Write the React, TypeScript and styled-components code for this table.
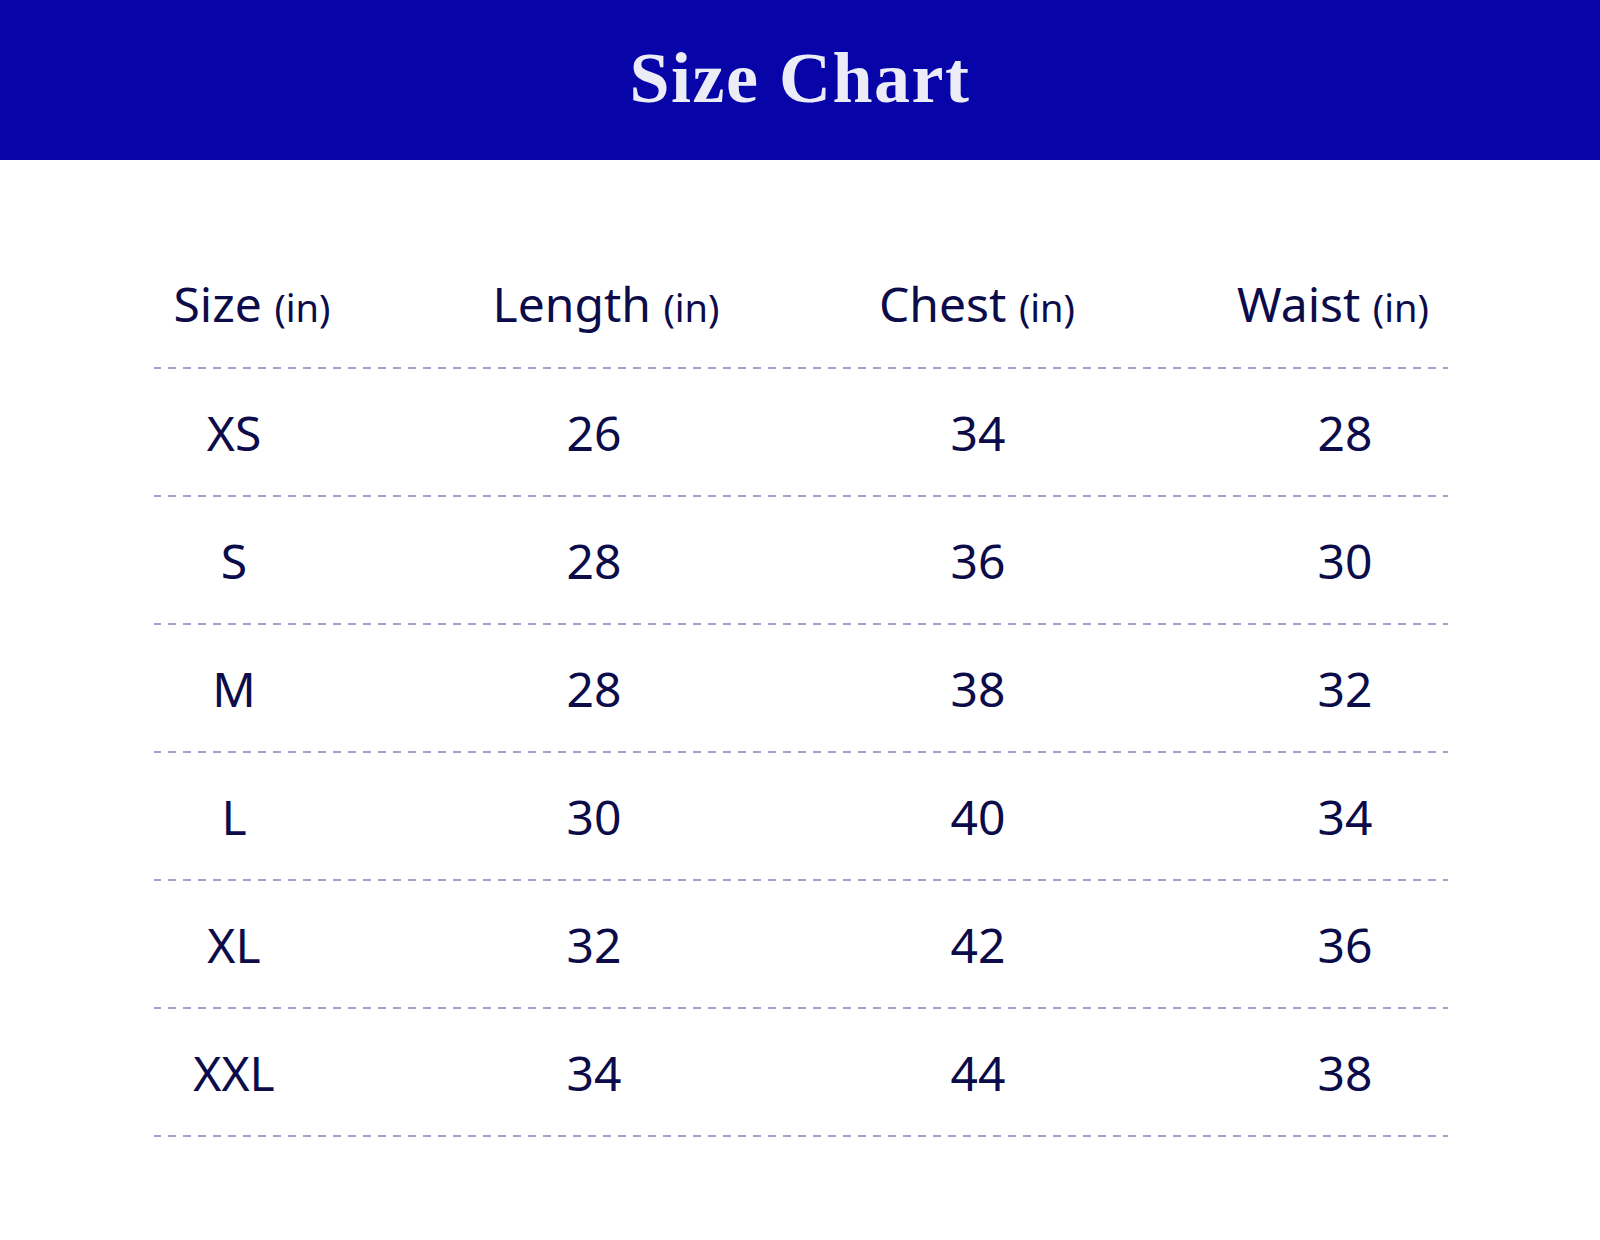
import React from "react";
import styled, { createGlobalStyle } from "styled-components";

const Global = createGlobalStyle`
  html, body { margin: 0; padding: 0; background: #ffffff; }
  body { font-family: "Noto Sans", "Open Sans", sans-serif; }
`;

const Page = styled.div`
  width: 1600px;
  min-height: 1240px;
  background: #ffffff;
`;

const Banner = styled.header`
  height: 160px;
  background: #0805a8;
  display: flex;
  align-items: center;
  justify-content: center;
`;

const Title = styled.h1`
  margin: 0;
  padding-bottom: 4px;
  font-family: "Liberation Serif", "Times New Roman", serif;
  font-weight: 700;
  font-size: 72px;
  letter-spacing: 1.5px;
  color: #ececf6;
  line-height: 1;
`;

const Table = styled.section`
  width: 1294px;
  margin: 0 0 0 154px;
  color: #0c0c4a;
`;

const Row = styled.div<{ $head?: boolean }>`
  display: grid;
  grid-template-columns: ${(p) =>
    p.$head ? "196px 512px 230px 482px" : "160px 560px 208px 526px"};
  align-items: ${(p) => (p.$head ? "end" : "center")};
  height: ${(p) => (p.$head ? "209px" : "128px")};
  padding-bottom: ${(p) => (p.$head ? "41px" : "0")};
  box-sizing: border-box;
  background-image: linear-gradient(to right, #a2a2d0 0 8px, transparent 8px 100%);
  background-size: 15px 2px;
  background-repeat: repeat-x;
  background-position: -1px bottom;
`;

const Cell = styled.div`
  text-align: center;
  font-size: 48px;
  line-height: 1;
  white-space: nowrap;
`;

const Unit = styled.span`
  font-size: 38px;
`;

const headers = ["Size", "Length", "Chest", "Waist"];
const data: [string, number, number, number][] = [
  ["XS", 26, 34, 28],
  ["S", 28, 36, 30],
  ["M", 28, 38, 32],
  ["L", 30, 40, 34],
  ["XL", 32, 42, 36],
  ["XXL", 34, 44, 38],
];

export default function App() {
  return (
    <Page>
      <Global />
      <Banner>
        <Title>Size Chart</Title>
      </Banner>
      <Table>
        <Row $head>
          {headers.map((h) => (
            <Cell key={h}>
              {h} <Unit>(in)</Unit>
            </Cell>
          ))}
        </Row>
        {data.map((r) => (
          <Row key={r[0]}>
            {r.map((v, i) => (
              <Cell key={i}>{v}</Cell>
            ))}
          </Row>
        ))}
      </Table>
    </Page>
  );
}
